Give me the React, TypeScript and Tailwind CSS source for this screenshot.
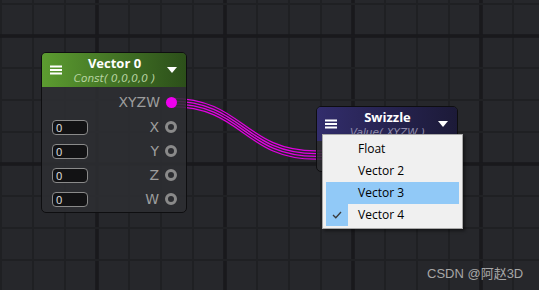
import React from "react";

const W = 539;
const H = 290;

const vLines = Array.from({ length: 18 }, (_, i) => 1 + i * 32);
const hLines = Array.from({ length: 10 }, (_, i) => 4 + i * 32);

function GridBackground() {
  return (
    <svg className="absolute inset-0" width={W} height={H}>
      {vLines.map((x) => {
        const thick = (x - 97) % 128 === 0;
        return (
          <line
            key={"v" + x}
            x1={x}
            y1={0}
            x2={x}
            y2={H}
            stroke={thick ? "#19191c" : "#1f2023"}
            strokeWidth={thick ? 3.5 : 2}
          />
        );
      })}
      {hLines.map((y) => {
        const thick = (y - 36) % 128 === 0;
        return (
          <line
            key={"h" + y}
            x1={0}
            y1={y}
            x2={W}
            y2={y}
            stroke={thick ? "#19191c" : "#1f2023"}
            strokeWidth={thick ? 3.5 : 2}
          />
        );
      })}
    </svg>
  );
}

function Wires() {
  const offsets = [-4.2, -1.4, 1.4, 4.2];
  const y0 = 102.5;
  const y1 = 155;
  return (
    <svg className="absolute inset-0" width={W} height={H}>
      {offsets.map((o) => (
        <path
          key={o}
          d={`M171 ${y0 + o} C243 ${y0 + o} 244 ${y1 + o} 316 ${y1 + o} L330 ${y1 + o}`}
          fill="none"
          stroke="#e100e1"
          strokeWidth={1.3}
        />
      ))}
    </svg>
  );
}

function Hamburger() {
  return (
    <svg width="12" height="10" viewBox="0 0 12 10">
      <rect x="0" y="0.5" width="12" height="2" fill="#fff" />
      <rect x="0" y="4" width="12" height="2" fill="#fff" />
      <rect x="0" y="7.5" width="12" height="2" fill="#fff" />
    </svg>
  );
}

function Caret() {
  return (
    <svg width="10" height="6" viewBox="0 0 10 6">
      <path d="M0 0 L10 0 L5 6 Z" fill="#fff" />
    </svg>
  );
}

function NodeHeader({
  title,
  subtitle,
  gradient,
  subColor,
}: {
  title: string;
  subtitle: string;
  gradient: string;
  subColor: string;
}) {
  return (
    <div className={`flex h-[34px] items-center pl-[8px] pr-[9px] ${gradient}`}>
      <Hamburger />
      <div className="flex flex-1 flex-col items-center">
        <span className="text-[13px] font-bold leading-[14px] text-white">{title}</span>
        <span
          className={`mt-[2px] font-['DejaVu_Sans',sans-serif] text-[10.5px] italic leading-[12px] ${subColor}`}
        >
          {subtitle}
        </span>
      </div>
      <Caret />
    </div>
  );
}

function Socket({ filled }: { filled?: boolean }) {
  return filled ? (
    <span className="h-[11px] w-[11px] rounded-full bg-[#ee00ee]" />
  ) : (
    <span className="h-[12px] w-[12px] rounded-full border-[3px] border-[#8a8a8a]" />
  );
}

const label = "font-['DejaVu_Sans',sans-serif] text-[14px] text-[#9d9d9d]";

function VectorNode() {
  const rows = ["X", "Y", "Z", "W"];
  return (
    <div className="absolute left-[41px] top-[52px] w-[146px] overflow-hidden rounded-[5px] border border-[#0e0e10] bg-[#2e2f33]/85">
      <NodeHeader
        title="Vector 0"
        subtitle="Const( 0,0,0,0 )"
        gradient="bg-gradient-to-r from-[#5c9c30] to-[#2c4f1a]"
        subColor="text-[#b9d4a2]"
      />
      <div className="flex flex-col pb-[1px] pt-[3px]">
        <div className="flex h-[25px] items-center justify-end gap-[6px] pr-[9px]">
          <span className={label}>XYZW</span>
          <Socket filled />
        </div>
        {rows.map((r) => (
          <div key={r} className="flex h-[24px] items-center pl-[10px] pr-[9px]">
            <div className="h-[15px] w-[36px] rounded-[4px] border border-[#8a8a8a] bg-[#121214] pl-[3px] text-[11px] leading-[13px] text-[#e2e2e2]">
              0
            </div>
            <span className={`ml-auto mr-[6px] ${label}`}>{r}</span>
            <Socket />
          </div>
        ))}
      </div>
    </div>
  );
}

function SwizzleNode() {
  return (
    <div className="absolute left-[316px] top-[106px] h-[66px] w-[142px] overflow-hidden rounded-[5px] border border-[#0e0e10] bg-[#2e2f33]/85">
      <NodeHeader
        title="Swizzle"
        subtitle="Value( XYZW )"
        gradient="bg-gradient-to-r from-[#322d6c] to-[#1c1a38]"
        subColor="text-[#8f8bab]"
      />
    </div>
  );
}

const items = ["Float", "Vector 2", "Vector 3", "Vector 4"];

function Check() {
  return (
    <svg width="10" height="8" viewBox="0 0 10 8">
      <path d="M1 4 L3.8 6.8 L9 1" fill="none" stroke="#3a3a3a" strokeWidth="1.3" />
    </svg>
  );
}

function DropdownMenu() {
  return (
    <div className="absolute left-[322px] top-[134px] w-[141px] border border-[#a8a8a8] bg-[#f0f0f0] p-[3px] pb-[2px] shadow-[2px_2px_3px_rgba(0,0,0,0.45)]">
      {items.map((it) => {
        const hover = it === "Vector 3";
        const checked = it === "Vector 4";
        return (
          <div
            key={it}
            className={`flex h-[22px] items-center text-[12px] text-black ${hover ? "bg-[#91c9f7]" : ""}`}
          >
            <div
              className={`flex h-full w-[22px] items-center justify-center ${checked ? "bg-[#91c9f7]" : ""}`}
            >
              {checked && <Check />}
            </div>
            <span className="ml-[10px]">{it}</span>
          </div>
        );
      })}
    </div>
  );
}

export default function App() {
  return (
    <div
      className="relative h-[290px] w-[539px] overflow-hidden bg-[#26272b]"
      style={{ fontFamily: '"Open Sans", "Noto Sans", sans-serif' }}
    >
      <GridBackground />
      <Wires />
      <VectorNode />
      <SwizzleNode />
      <DropdownMenu />
      <span className="absolute left-[427px] top-[264px] font-['Liberation_Sans','Noto_Sans_CJK_SC',sans-serif] text-[13px] text-[#a6a6a6]">
        CSDN @阿赵3D
      </span>
    </div>
  );
}
